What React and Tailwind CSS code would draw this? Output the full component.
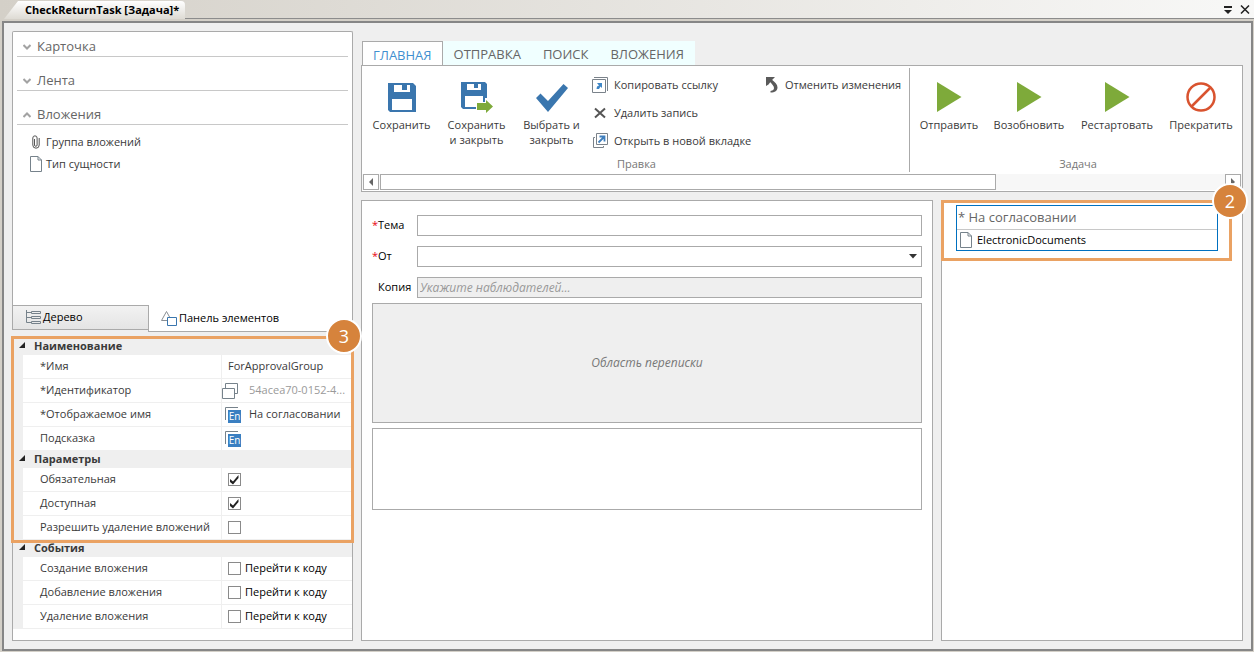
import React, { useState } from "react";

const SaveIcon = () => (
  <svg width="28" height="29" viewBox="0 0 28 29">
    <path d="M0 0h25l3 3v26H2l-2-2z" fill="#3a76ae" />
    <path d="M6 2h16v7H6zM4 16h20v11H4z" fill="#fff" />
    <path d="M14 2h5v5h-5z" fill="#3a76ae" />
  </svg>
);

const SaveCloseIcon = () => (
  <svg width="32" height="31" viewBox="0 0 32 31">
    <path d="M0 0h24l2 2v25H2l-2-2z" fill="#3a76ae" />
    <path d="M6 2h14v6H6zM4 14h18v11H4z" fill="#fff" />
    <path d="M13 2h4v4h-4z" fill="#3a76ae" />
    <path d="M15 20h9v-4h2l6 7v8h-8v-2h-9z" fill="#fff" />
    <path d="M16 21h9v-3l7 6.500-7 6.500v-3h-9z" fill="#7eaa3a" />
  </svg>
);

const CheckIcon = () => (
  <svg width="32" height="29" viewBox="0 0 32 29">
    <path d="M0 15l4.500-4.500L12 18 27.500 1 32 5 12 29z" fill="#3a76ae" />
  </svg>
);

const PlayIcon = () => (
  <svg width="26" height="30" viewBox="0 0 26 30">
    <path d="M1 0L25.500 15 1 30z" fill="#7eaa3a" />
  </svg>
);

const StopIcon = () => (
  <svg width="30" height="30" viewBox="0 0 30 30" fill="none" stroke="#d9532f" strokeWidth="2.500">
    <circle cx="15" cy="15" r="13.500" />
    <path d="M5.500 24.500l19-19" />
  </svg>
);

const CopyLinkIcon = () => (
  <svg width="16" height="16" viewBox="0 0 16 16" fill="none">
    <path d="M2 0.500h13.500V14" stroke="#7a828a" />
    <path d="M0.500 2.500h13v13H0.500z" stroke="#7a828a" />
    <path d="M5 6h5v5L8.500 9.500 7 12H4.500l0.500-2.500 2-1z" fill="#3f86c6" />
  </svg>
);

const DeleteIcon = () => (
  <svg width="16" height="16" viewBox="0 0 16 16" stroke="#555" strokeWidth="2">
    <path d="M3 3.500l10 9M13 3.500l-10 9" />
  </svg>
);

const OpenTabIcon = () => (
  <svg width="16" height="16" viewBox="0 0 16 16" fill="none">
    <path d="M3 4.500H1.500v10h10V13" stroke="#7a828a" />
    <path d="M4.500 0.500h11v11h-11z" stroke="#7a828a" />
    <path d="M6.500 9.500l5-5M7.500 3.500h5v5" stroke="#3f7fbd" strokeWidth="1.800" />
  </svg>
);

const UndoIcon = () => (
  <svg width="14" height="16" viewBox="0 0 14 16" fill="#5a5a5a">
    <path d="M1 0h9L7.500 2.500 5 5.500 3.500 7.500 1 9z" />
    <path d="M4 4l2-2C10 5 12.500 7.500 12.500 10.500 12.500 13.500 10 15.500 5.500 15.500V14C8 13.500 9 12.500 9 11 9 9 7 7 4 4z" />
  </svg>
);

const FileIcon = () => (
  <svg width="12" height="16" viewBox="0 0 12 16" fill="#fff" stroke="#76828b">
    <path d="M0.500 0.500H8L11.500 4v11.500H0.500zM8 0.500V4h3.500" />
  </svg>
);

const ClipIcon = () => (
  <svg width="8" height="14" viewBox="0 0 8 14" fill="none" stroke="#555">
    <path d="M2.500 4v6a1.300 1.300 0 0 0 2.600 0V3a2 2 0 0 0-4.300 0v7a3.200 3.200 0 0 0 6.400 0V3" />
  </svg>
);

const TreeIcon = () => (
  <svg width="16" height="15" viewBox="0 0 16 15" fill="none" stroke="#76828b">
    <path d="M0.500 0v12.500H5M0.500 2.500H5M0.500 7.500H5M5.500 1.500h9v2h-9zM5.500 6.500h9v2h-9zM5.500 11.500h9v2h-9z" />
  </svg>
);

const ShapesIcon = () => (
  <svg width="16" height="15" viewBox="0 0 16 15" fill="none">
    <path d="M0.500 9.500L5.500 0.500 10.500 9.500z" stroke="#8a8f94" />
    <path d="M6.500 6.500h9v8h-9z" fill="#fff" stroke="#3a76ae" />
  </svg>
);

const CopyIcon = () => (
  <svg width="16" height="16" viewBox="0 0 16 16" fill="#fff" stroke="#76828b">
    <path d="M3.500 5V0.500h12v10H12M0.500 5.500h12v10h-12z" />
  </svg>
);

// Localised string marker
const EnIcon = () => (
  <svg width="16" height="16" viewBox="0 0 16 16">
    <path d="M0.500 13V0.500H13" fill="none" stroke="#76828b" />
    <path d="M3 3h13v13H3z" fill="#3a7fc1" />
    <text x="9.500" y="13" textAnchor="middle" fontSize="10" fill="#fff">En</text>
  </svg>
);

const Chevron = ({ open }) => (
  <svg width="8" height="6" viewBox="0 0 8 6" fill="none" stroke="#a3a3a3" strokeWidth="2">
    <path d={open ? "M0.500 5L4 1.500 7.500 5" : "M0.500 1L4 4.500 7.500 1"} />
  </svg>
);

const Badge = ({ children, className }) => (
  <span
    className={`absolute z-10 flex size-9 items-center justify-center rounded-full border-2 border-white bg-[#d6833c] text-lg text-white ${className}`}
  >
    {children}
  </span>
);

const Section = ({ title, open, onToggle, children }) => (
  <section className="mb-[9px]">
    <button
      type="button"
      onClick={onToggle}
      aria-expanded={open}
      className="flex h-[25px] w-full items-center gap-[6px] border-b border-[#c8c8c8] pt-[5px] pl-[6px] text-[13px] text-[#666]"
    >
      <Chevron open={open} />
      {title}
    </button>
    {open && children}
  </section>
);

const Check = ({ id, defaultChecked }) => (
  <span className="relative flex size-[13px] shrink-0">
    <input
      id={id}
      type="checkbox"
      defaultChecked={defaultChecked}
      className="peer size-[13px] appearance-none border border-[#8a8a8a] bg-white"
    />
    <svg
      className="pointer-events-none absolute inset-0 hidden peer-checked:block"
      width="13"
      height="13"
      viewBox="0 0 13 13"
    >
      <path d="M2 6l3 2.500L10.500 2v3L5 11.500 2 9z" fill="#222" />
    </svg>
  </span>
);

const PropGroup = ({ title, children }) => (
  <section>
    <h3 className="flex h-[17px] items-center gap-2 pl-[6px] font-bold text-[#3a3a3a]">
      <svg className="mb-1" width="7" height="6" viewBox="0 0 7 6">
        <path d="M6 0v6H0z" fill="#222" />
      </svg>
      {title}
    </h3>
    <div className="ml-[10px]">{children}</div>
  </section>
);

const PropRow = ({ id, label, children }) => (
  <div className="flex h-6 border-b border-[#efefef] bg-white">
    <label
      htmlFor={id}
      className="flex w-[199px] shrink-0 items-center border-r border-[#efefef] pl-[17px] whitespace-nowrap"
    >
      {label}
    </label>
    <div className="flex min-w-0 flex-1 items-center">{children}</div>
  </div>
);

const BigButton = ({ icon, label, className }) => (
  <button
    type="button"
    className={`flex flex-col items-center gap-1 pt-[10px] leading-[15px] whitespace-pre-line ${className}`}
  >
    <span className="flex h-8 items-center justify-center">{icon}</span>
    {label}
  </button>
);

const SmallButton = ({ icon, label }) => (
  <button type="button" className="flex h-7 items-center gap-[6px] whitespace-nowrap">
    {icon}
    {label}
  </button>
);

const RibbonGroup = ({ caption, className, children }) => (
  <div className={`my-[2px] pt-[3px] ${className}`}>
    <div className="flex h-[84px] items-start">{children}</div>
    <p className="text-center leading-[17px] text-[#777]">{caption}</p>
  </div>
);

const tabs = ["ГЛАВНАЯ", "ОТПРАВКА", "ПОИСК", "ВЛОЖЕНИЯ"];

const events = [
  { id: "create", label: "Создание вложения" },
  { id: "add", label: "Добавление вложения" },
  { id: "remove", label: "Удаление вложения" },
];

const App = () => {
  const [sections, setSections] = useState({ card: false, ribbon: false, files: true });
  const [activeTab, setActiveTab] = useState("ГЛАВНАЯ");

  const toggle = (key) => {
    setSections({ ...sections, [key]: !sections[key] });
  };

  return (
    <div className="flex min-h-screen flex-col bg-[#d4d0c8] font-['Open_Sans','Noto_Sans',sans-serif] text-[11px] text-[#3a3a3a]">
      {/* Document tab strip */}
      <header className="flex h-[19px] shrink-0 items-end bg-linear-to-r from-[#d4d0c8] to-[#f8f8f7]">
        <div className="ml-1 flex h-[18px] items-center rounded-tr bg-linear-to-b from-white to-[#dedbd4] pr-[6px] pl-[21px] font-bold whitespace-nowrap text-black [clip-path:polygon(0_100%,14px_0,100%_0,100%_100%)]">
          CheckReturnTask [Задача]*
        </div>
        <div className="flex h-full flex-1 items-center justify-end gap-[7px] border-b border-[#8c8c8c] pr-1">
          <button type="button" aria-label="Список окон">
            <svg width="10" height="9" viewBox="0 0 10 9" fill="#222">
              <path d="M1 1h8v2H1zM1 5h8L5 9z" />
            </svg>
          </button>
          <button type="button" aria-label="Закрыть">
            <svg width="10" height="9" viewBox="0 0 10 9" stroke="#222" strokeWidth="1.500">
              <path d="M1 0.500l8 8M9 0.500l-8 8" />
            </svg>
          </button>
        </div>
      </header>

      <div className="mx-px mt-[2px] mb-px ml-[2px] flex flex-1 gap-2 border-2 border-[#868686] bg-[#efefef] p-2">
        {/* Left column */}
        <aside className="flex w-[341px] shrink-0 flex-col">
          <div className="flex-1 rounded-t-xs border border-b-0 border-[#aaa] bg-white px-1">
            <Section title="Карточка" open={sections.card} onToggle={() => toggle("card")} />
            <Section title="Лента" open={sections.ribbon} onToggle={() => toggle("ribbon")} />
            <Section title="Вложения" open={sections.files} onToggle={() => toggle("files")}>
              <ul className="mt-[6px] ml-3">
                <li className="flex h-[22px] items-center gap-1">
                  <span className="flex w-[13px] justify-center">
                    <ClipIcon />
                  </span>
                  Группа вложений
                </li>
                <li className="flex h-[22px] items-center gap-1">
                  <span className="flex w-[13px] justify-center">
                    <FileIcon />
                  </span>
                  Тип сущности
                </li>
              </ul>
            </Section>
          </div>
          <div className="flex items-start text-black">
            <button
              type="button"
              className="flex h-[25px] w-[136px] items-center gap-px border border-r-0 border-[#aaa] bg-linear-to-b from-[#f2f2f2] to-[#e4e4e4] pl-[13px]"
            >
              <TreeIcon />
              Дерево
            </button>
            <button
              type="button"
              className="flex h-[27px] flex-1 items-center gap-[2px] border border-t-0 border-[#aaa] bg-white pl-3"
            >
              <ShapesIcon />
              Панель элементов
            </button>
          </div>

          {/* Property grid */}
          <div className="mt-1 border border-[#aaa] bg-white pt-px pb-[11px]">
            <div className="relative bg-[#efefef]">
              <PropGroup title="Наименование">
                <PropRow id="name" label="*Имя">
                  <input id="name" defaultValue="ForApprovalGroup" className="w-full min-w-0 pl-[6px] outline-none" />
                </PropRow>
                <PropRow id="guid" label="*Идентификатор">
                  <button type="button" aria-label="Копировать" className="mr-[11px] shrink-0">
                    <CopyIcon />
                  </button>
                  <input id="guid" readOnly value="54acea70-0152-4..." className="w-full min-w-0 text-[#9a9a9a] outline-none" />
                </PropRow>
                <PropRow id="display" label="*Отображаемое имя">
                  <button type="button" aria-label="Перевод имени" className="mr-2 ml-[3px] shrink-0">
                    <EnIcon />
                  </button>
                  <input id="display" defaultValue="На согласовании" className="w-full min-w-0 outline-none" />
                </PropRow>
                <PropRow id="hint" label="Подсказка">
                  <button type="button" aria-label="Перевод подсказки" className="mr-2 ml-[3px] shrink-0">
                    <EnIcon />
                  </button>
                  <input id="hint" className="w-full min-w-0 outline-none" />
                </PropRow>
              </PropGroup>
              <PropGroup title="Параметры">
                <PropRow id="required" label="Обязательная">
                  <span className="pl-[6px]">
                    <Check id="required" defaultChecked />
                  </span>
                </PropRow>
                <PropRow id="enabled" label="Доступная">
                  <span className="pl-[6px]">
                    <Check id="enabled" defaultChecked />
                  </span>
                </PropRow>
                <PropRow id="allowRemove" label="Разрешить удаление вложений">
                  <span className="pl-[6px]">
                    <Check id="allowRemove" />
                  </span>
                </PropRow>
              </PropGroup>
              <div className="pointer-events-none absolute -inset-x-[2px] -top-[2px] -bottom-[3px] border-3 border-[#eaa263]" />
              <Badge className="-top-[20px] -right-[10px]">3</Badge>
            </div>
            <div className="bg-[#efefef]">
              <PropGroup title="События">
                {events.map((item) => (
                  <PropRow key={item.id} id={item.id} label={item.label}>
                    <span className="flex items-center gap-1 pl-[6px] whitespace-nowrap">
                      <Check id={item.id} />
                      <a href="#code" className="text-black">
                        Перейти к коду
                      </a>
                    </span>
                  </PropRow>
                ))}
              </PropGroup>
            </div>
          </div>
        </aside>

        {/* Card designer */}
        <main className="flex min-w-0 flex-1 flex-col pt-[10px]">
          <nav className="ml-px flex h-6 self-start bg-[#f0ffff] text-[13px] text-[#666]">
            {tabs.map((tab) => (
              <button
                key={tab}
                type="button"
                onClick={() => setActiveTab(tab)}
                className={
                  tab === activeTab
                    ? "border border-b-0 border-[#aaa] bg-white px-[10px] pt-1 text-[#3f8fd0]"
                    : "px-[11px] pt-1"
                }
              >
                {tab}
              </button>
            ))}
          </nav>

          <div className="border border-[#aaa] bg-white">
            <div className="flex overflow-hidden">
              <RibbonGroup caption="Правка" className="w-[548px] shrink-0 border-r border-[#aaa] pl-[2px]">
                <BigButton icon={<SaveIcon />} label="Сохранить" className="w-[75px]" />
                <BigButton icon={<SaveCloseIcon />} label={"Сохранить\nи закрыть"} className="w-[75px]" />
                <BigButton icon={<CheckIcon />} label={"Выбрать и\nзакрыть"} className="w-[75px]" />
                <div className="ml-[3px] flex w-[173px] shrink-0 flex-col">
                  <SmallButton icon={<CopyLinkIcon />} label="Копировать ссылку" />
                  <SmallButton icon={<DeleteIcon />} label="Удалить запись" />
                  <SmallButton icon={<OpenTabIcon />} label="Открыть в новой вкладке" />
                </div>
                <SmallButton icon={<UndoIcon />} label="Отменить изменения" />
              </RibbonGroup>
              <RibbonGroup caption="Задача" className="flex-1 pl-1">
                <BigButton icon={<PlayIcon />} label="Отправить" className="w-[70px]" />
                <BigButton icon={<PlayIcon />} label="Возобновить" className="w-[90px]" />
                <BigButton icon={<PlayIcon />} label="Рестартовать" className="w-[86px]" />
                <BigButton icon={<StopIcon />} label="Прекратить" className="w-[82px]" />
              </RibbonGroup>
            </div>
            {/* Ribbon scrollbar */}
            <div className="mb-px flex h-4 gap-px bg-[#f7f7f7] px-px">
              <button type="button" aria-label="Влево" className="flex w-4 items-center justify-center border border-[#aaa] bg-white">
                <svg width="4" height="8" viewBox="0 0 4 8">
                  <path d="M4 0v8L0 4z" fill="#666" />
                </svg>
              </button>
              <div className="flex-1">
                <div className="h-full w-[73%] border border-[#aaa] bg-white" />
              </div>
              <button type="button" aria-label="Вправо" className="flex w-4 items-center justify-center border border-[#aaa] bg-white">
                <svg width="4" height="8" viewBox="0 0 4 8">
                  <path d="M0 0v8l4-4z" fill="#666" />
                </svg>
              </button>
            </div>
          </div>

          <div className="mt-2 flex flex-1 gap-2">
            <form className="flex min-w-0 flex-1 flex-col border border-[#aaa] bg-white px-[10px] pt-[14px] text-black">
              <div className="flex h-[21px] items-center">
                <label htmlFor="subject" className="w-[45px] shrink-0">
                  <span className="text-red-600">*</span>Тема
                </label>
                <input id="subject" className="h-full min-w-0 flex-1 border border-[#aaa] bg-white px-1" />
              </div>
              <div className="mt-[10px] flex h-[21px] items-center">
                <label htmlFor="from" className="w-[45px] shrink-0">
                  <span className="text-red-600">*</span>От
                </label>
                <div className="relative h-full flex-1">
                  <select id="from" className="block h-full w-full appearance-none border border-[#aaa] bg-white px-1">
                    <option></option>
                  </select>
                  <svg className="pointer-events-none absolute top-2 right-[5px]" width="8" height="5" viewBox="0 0 8 5">
                    <path d="M0 0h8L4 4.500z" fill="#333" />
                  </svg>
                </div>
              </div>
              <div className="mt-[10px] flex h-[21px] items-center">
                <label htmlFor="copy" className="w-[45px] shrink-0 pl-[6px]">
                  Копия
                </label>
                <input
                  id="copy"
                  placeholder="Укажите наблюдателей..."
                  className="h-full min-w-0 flex-1 border border-[#aaa] bg-[#efefef] px-[2px] text-xs placeholder:text-[#999] placeholder:italic"
                />
              </div>
              <div className="mt-[5px] flex h-[120px] items-center justify-center border border-[#aaa] bg-[#efefef] text-xs text-[#777] italic">
                Область переписки
              </div>
              <textarea aria-label="Текст" className="mt-[5px] h-[82px] resize-none border border-[#aaa] bg-white p-1" />
            </form>

            <div className="w-[302px] shrink-0 border border-[#aaa] bg-white">
              <div className="relative -mt-px h-[61px] px-[14px] pt-[5px]">
                <div className="mr-[10px] h-[46px] border border-[#0070c0] bg-white">
                  <h3 className="flex h-6 items-center border-b border-[#c8c8c8] pl-px text-[13px] text-[#666]">
                    * На согласовании
                  </h3>
                  <p className="flex h-5 items-center gap-[5px] pl-[3px] text-black">
                    <FileIcon />
                    ElectronicDocuments
                  </p>
                </div>
                <div className="pointer-events-none absolute inset-y-0 right-[10px] -left-px border-3 border-[#eaa263]" />
                <Badge className="-top-[17px] -right-[6px]">2</Badge>
              </div>
            </div>
          </div>
        </main>
      </div>
    </div>
  );
};

export default App;
